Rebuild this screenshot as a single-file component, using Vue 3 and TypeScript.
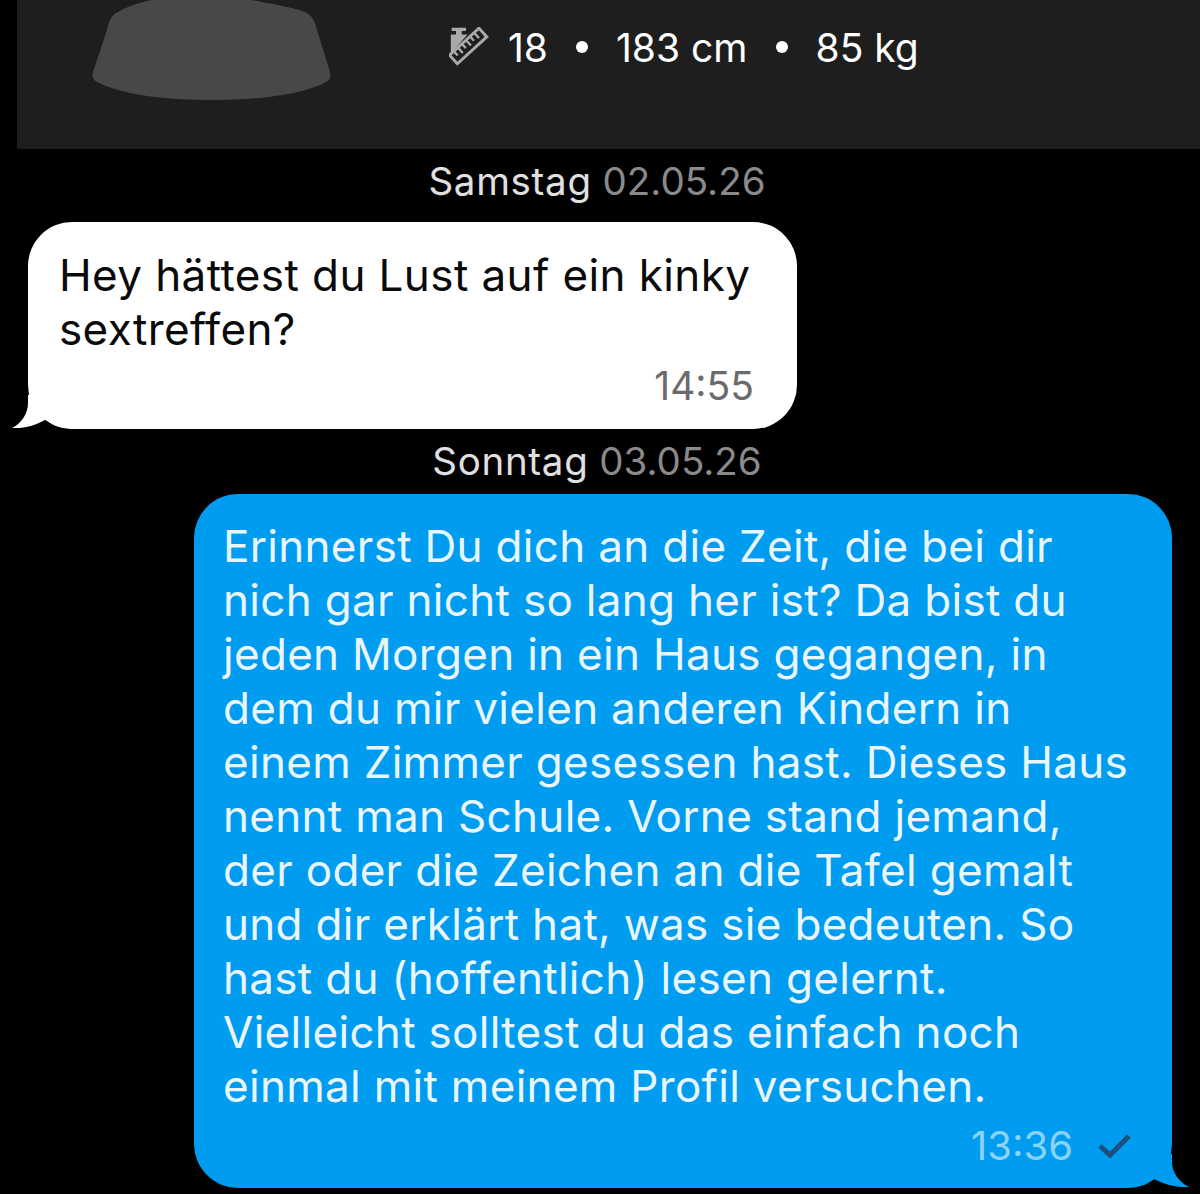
<script setup lang="ts">
const stats = ['18', '183 cm', '85 kg']
const ticks = [5, 10.5, 16, 21.5, 27, 32.5]
const outgoing =
	'Erinnerst Du dich an die Zeit, die bei dir nich gar nicht so lang her ist? Da bist du jeden Morgen in ein Haus gegangen, in dem du mir vielen anderen Kindern in einem Zimmer gesessen hast. Dieses Haus nennt man Schule. Vorne stand jemand, der oder die Zeichen an die Tafel gemalt und dir erklärt hat, was sie bedeuten. So hast du (hoffentlich) lesen gelernt. Vielleicht solltest du das einfach noch einmal mit meinem Profil versuchen.'
</script>

<template>
	<div class="chat">
		<header class="profile">
			<svg class="avatar" width="240" height="100" viewBox="0 0 240 100">
				<path
					d="M60 0 C45 3 32 8 24 13 C18 17 17 22 15 30 L1 72 C0 77 1 80 5 82 C30 95 75 100 120 100 C165 100 210 95 234 82 C238 80 239 77 238 72 L225 30 C223 22 221 17 215 13 C207 8 175 3 160 0 Z"
					fill="#484848"
				/>
			</svg>
			<div class="stats">
				<svg class="stats__icon" width="40" height="40" viewBox="0 0 40 40">
					<path d="M2.7 0.7 H17 V4 H12.7 V7.5 H18.5 L1.8 26.5 V7.5 H7 V4 H2.7 Z" fill="#aaa" />
					<g transform="rotate(-42.5 19.15 19)" fill="none" stroke="#aaa">
						<rect x="-0.8" y="13.2" width="39.9" height="11.6" stroke-width="3" />
						<path
							v-for="(x, i) in ticks"
							:key="x"
							:d="`M${x} 13 V${i % 2 ? 20.5 : 19}`"
							stroke-width="2.4"
						/>
					</g>
				</svg>
				<template v-for="(stat, i) in stats" :key="stat">
					<span v-if="i > 0" class="stats__dot"></span>
					<span>{{ stat }}</span>
				</template>
			</div>
		</header>

		<div class="date date--first"><b>Samstag</b> <span>02.05.26</span></div>

		<div class="bubble bubble--in">
			<p>Hey hättest du Lust auf ein kinky sextreffen?</p>
			<div class="bubble__meta"><time>14:55</time></div>
			<svg class="tail tail--in" width="70" height="34" viewBox="0 0 70 34">
				<path d="M16 0 L16 8 C16 18 10 28 0 33 C14 33.5 24 30 34 24.5 C40 29 47 33.4 60 33.4 L60 0 Z" fill="#fff" />
			</svg>
		</div>

		<div class="date"><b>Sonntag</b> <span>03.05.26</span></div>

		<div class="bubble bubble--out">
			<p>{{ outgoing }}</p>
			<div class="bubble__meta">
				<time>13:36</time>
				<svg class="check" width="34" height="26" viewBox="0 0 34 26">
					<path d="M2 13 L12 22 L31 3" fill="none" stroke="#1c4f7c" stroke-width="5" />
				</svg>
			</div>
			<svg class="tail tail--out" width="70" height="34" viewBox="0 0 70 34">
				<path d="M53 0 L53 8 C53 18 60 28 70 33 C56 33.5 44 30 34 24.5 C28 29 18 33.4 4 33.4 L0 0 Z" fill="#009cf0" />
			</svg>
		</div>
	</div>
</template>

<style scoped>
.chat {
	display: flex;
	flex-direction: column;
	width: 1200px;
	height: 1194px;
	overflow: hidden;
	background: #000;
	font-family: Inter, "Liberation Sans", sans-serif;
}

.profile {
	position: relative;
	flex: none;
	height: 149px;
	margin-left: 17px;
	background: #1e1e1e;
}

.avatar {
	position: absolute;
	left: 75px;
	top: 0;
}

.stats {
	position: absolute;
	left: 432px;
	top: 22px;
	display: flex;
	align-items: center;
	height: 50px;
	color: #fff;
	font-size: 39px;
}

.stats__icon {
	margin-right: 19px;
}

.stats__dot {
	width: 12px;
	height: 12px;
	margin: 0 28px;
	border-radius: 50%;
	background: #fff;
}

.date {
	flex: none;
	height: 65px;
	padding-top: 9px;
	box-sizing: border-box;
	text-align: center;
	font-size: 38.5px;
	line-height: 46px;
	color: #8a8a8a;
	margin-left: -6px;
}

.date b {
	font-weight: 400;
	letter-spacing: 0.7px;
	color: #e0e0e0;
}

.date--first {
	height: 73px;
}

.bubble {
	position: relative;
	flex: none;
	box-sizing: border-box;
	border-radius: 44px;
	font-size: 44px;
	line-height: 54px;
	letter-spacing: 0.4px;
}

.bubble p {
	margin: 0;
}

.bubble__meta {
	display: flex;
	justify-content: flex-end;
	align-items: center;
	line-height: 46px;
	letter-spacing: 0;
}

.bubble--in {
	align-self: flex-start;
	width: 769px;
	height: 207px;
	margin-left: 28px;
	padding: 26px 43px 0 31px;
	background: #fff;
	color: #0a0a0a;
}

.bubble--in .bubble__meta {
	margin-top: 7px;
	font-size: 39px;
	color: #6b6b6b;
}

.bubble--out {
	align-self: flex-end;
	width: 978px;
	height: 694px;
	margin-right: 28px;
	padding: 25px 40px 0 29px;
	background: #009cf0;
	color: #e9f6ff;
	letter-spacing: 0.3px;
}

.bubble--out .bubble__meta {
	margin-top: 10px;
	font-size: 40px;
	color: #8ad4fc;
}

.check {
	margin-left: 25px;
}

.tail {
	position: absolute;
	bottom: 0;
}

.tail--in {
	left: -16px;
}

.tail--out {
	right: -17px;
}
</style>

<style>
html,
body {
	background: #000;
}
</style>
